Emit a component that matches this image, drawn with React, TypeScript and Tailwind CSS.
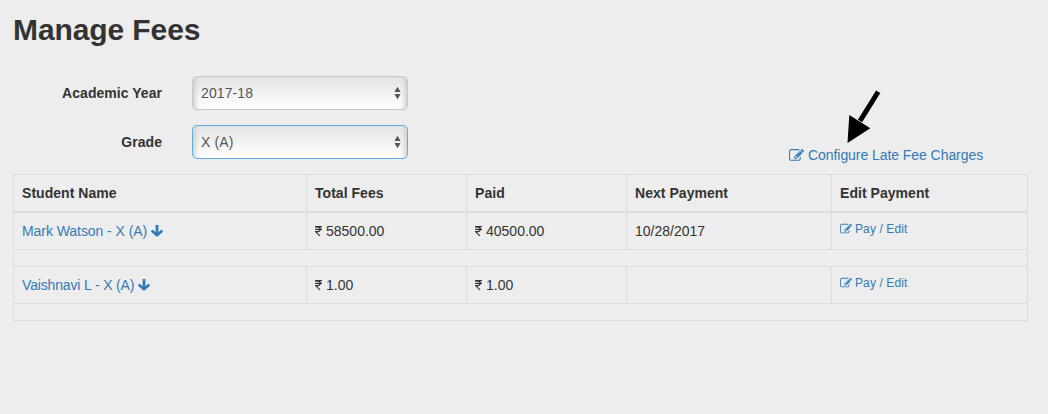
import type { ReactNode } from "react";

function PencilSquare({ className }: { className: string }) {
  return (
    <svg viewBox="0 0 1792 1792" className={className} fill="currentColor" aria-hidden="true">
      <path d="M888 1184l116-116-152-152-116 116v56h96v96h56zm440-720q-16-16-33 1l-350 350q-17 17-1 33t33-1l350-350q17-17 1-33zm80 594v190q0 119-84.500 203.500t-203.500 84.500h-832q-119 0-203.500-84.500t-84.500-203.500v-832q0-119 84.500-203.500t203.500-84.500h832q63 0 117 25 15 7 18 23 3 17-9 29l-49 49q-14 14-32 8-23-6-45-6h-832q-66 0-113 47t-47 113v832q0 66 47 113t113 47h832q66 0 113-47t47-113v-126q0-13 9-22l64-64q15-15 35-7t20 29zm-96-738l288 288-672 672h-288v-288zm444 132l-92 92-288-288 92-92q28-28 68-28t68 28l152 152q28 28 28 68t-28 68z" />
    </svg>
  );
}

function Rupee() {
  return (
    <svg viewBox="0 0 7 10" className="mb-px h-[10px] w-[7px] shrink-0" fill="none" stroke="currentColor" aria-hidden="true">
      <path d="M0.200 0.600H7M0.200 3.300H7" strokeWidth="1.150" />
      <path d="M0.200 0.900H2.400C6.200 0.900 6.200 5.600 2.400 5.600H0.600L4.900 9.900" strokeWidth="1.200" />
    </svg>
  );
}

function ArrowDown() {
  return (
    <svg viewBox="0 0 12 12" className="h-3 w-3 shrink-0" aria-hidden="true">
      <path d="M6 0V9.500" fill="none" stroke="currentColor" strokeWidth="2.800" />
      <path d="M1.500 6.300L6 10.300L10.500 6.300" fill="none" stroke="currentColor" strokeWidth="2.700" strokeLinecap="round" strokeLinejoin="round" />
    </svg>
  );
}

function SelectField({ label, value, focused }: { label: string; value: string; focused?: boolean }) {
  return (
    <div className="flex h-[34px] items-center">
      <div className="w-[162px] text-right font-bold tracking-[0.04px]">{label}</div>
      <button
        type="button"
        className={`ml-[30px] flex h-[34px] w-[216px] items-center justify-between rounded-[5px] border bg-linear-to-b from-[#e4e4e4] to-white pr-[6px] pl-2 text-[#555] ${
          focused ? "border-[#5eaee5]" : "border-[#c8c8c8]"
        } shadow-[inset_6px_0_5px_-4px_#cccccc,inset_-6px_0_5px_-4px_#cccccc]`}
      >
        <span className="tracking-[0.1px]">{value}</span>
        <svg viewBox="0 0 7 14" className="h-[14px] w-[7px]" fill="#555" aria-hidden="true">
          <path d="M3.500 0.800L6.600 6H0.400ZM3.500 13.200L6.600 8H0.400Z" />
        </svg>
      </button>
    </div>
  );
}

function Cell({ children, className = "" }: { children?: ReactNode; className?: string }) {
  return <td className={`border-r border-b border-[#ddd] px-2 py-0 align-middle ${className}`}>{children}</td>;
}

function Amount({ value }: { value: string }) {
  return (
    <span className="flex items-center gap-[4px]">
      <Rupee />
      <span>{value}</span>
    </span>
  );
}

const students = [
  { name: "Mark Watson - X (A)", total: "58500.00", paid: "40500.00", next: "10/28/2017", spacing: "tracking-[-0.06px]" },
  { name: "Vaishnavi L - X (A)", total: "1.00", paid: "1.00", next: "", spacing: "tracking-[-0.15px]" },
];

const headings = ["Student Name", "Total Fees", "Paid", "Next Payment", "Edit Payment"];

export default function App() {
  return (
    <main className="h-[414px] w-[1048px] overflow-hidden bg-[#ededed] font-['Liberation_Sans',Arial,sans-serif] text-sm leading-5 text-[#333]">
      <h1 className="pt-[13px] pl-[13px] text-[30px] leading-[33px] font-bold tracking-[-0.1px]">Manage Fees</h1>

      <div className="mt-[30px] flex h-[98px]">
        <div className="flex flex-col gap-[15px]">
          <SelectField label="Academic Year" value="2017-18" />
          <SelectField label="Grade" value="X (A)" focused />
        </div>
        <div className="ml-[381px] flex flex-col">
          <svg viewBox="0 0 34 53" className="mt-[14px] ml-[58px] h-[53px] w-[34px]" aria-hidden="true">
            <path d="M31.200 1.700L13 31" stroke="#000" strokeWidth="5" />
            <path d="M0.500 53L2.300 25L23.300 38.300Z" fill="#000" />
          </svg>
          <a href="#" className="mt-[2px] flex items-center gap-[4px] text-[#337ab7]">
            <PencilSquare className="h-[15px] w-[15px]" />
            <span className="tracking-[-0.06px]">Configure Late Fee Charges</span>
          </a>
        </div>
      </div>

      <table className="ml-[13px] w-[1015px] table-fixed border-separate border-spacing-0 border-t border-l border-[#ddd]">
        <colgroup>
          <col className="w-[293px]" />
          <col className="w-[160px]" />
          <col className="w-[160px]" />
          <col className="w-[205px]" />
          <col className="w-[196px]" />
        </colgroup>
        <thead>
          <tr className="h-[38px]">
            {headings.map((heading) => (
              <th key={heading} className="border-r border-b-2 border-[#ddd] px-2 py-0 text-left font-bold tracking-[0.04px]">
                {heading}
              </th>
            ))}
          </tr>
        </thead>
        {students.map((student) => (
          <tbody key={student.name}>
            <tr className="h-[37px]">
              <Cell>
                <a href="#" className="flex items-center gap-1 text-[#337ab7]">
                  <span className={student.spacing}>{student.name}</span>
                  <ArrowDown />
                </a>
              </Cell>
              <Cell>
                <Amount value={student.total} />
              </Cell>
              <Cell>
                <Amount value={student.paid} />
              </Cell>
              <Cell>{student.next}</Cell>
              <Cell>
                <a href="#" className="mb-1 flex items-center gap-[3px] text-xs leading-[18px] text-[#337ab7]">
                  <PencilSquare className="h-3 w-3" />
                  <span className="tracking-[0.1px]">Pay / Edit</span>
                </a>
              </Cell>
            </tr>
            <tr className="h-[17px]">
              <td colSpan={5} className="border-r border-b border-[#ddd] p-0" />
            </tr>
          </tbody>
        ))}
      </table>
    </main>
  );
}
